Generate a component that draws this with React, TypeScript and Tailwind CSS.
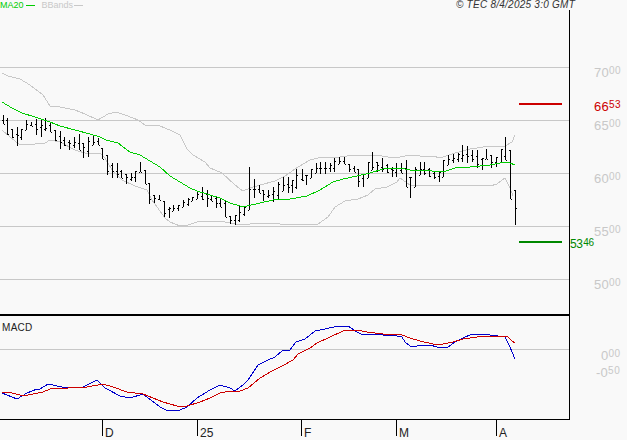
const sans = '[font-family:"Liberation_Sans",Arial,sans-serif]';

// page coordinates, read off the chart: [x, high, low]
const bars: [number, number, number][] = [
  [3,115,124],[7,118,135],[12,129,138],[17,127,146],[21,129,140],[26,120,130],[31,122,126],[36,119,135],[41,120,137],[45,118,131],
  [50,123,132],[55,130,141],[60,131,149],[64,137,146],[69,140,150],[74,137,148],[79,134,150],[83,143,158],[88,137,157],[93,136,145],
  [98,138,145],[102,148,159],[107,155,175],[112,163,178],[117,163,178],[121,170,178],[126,174,184],[131,173,181],[135,171,182],[140,162,172],
  [145,170,184],[149,183,204],[154,195,203],[159,195,200],[164,201,217],[169,207,218],[173,205,211],[178,205,211],[183,200,207],[188,198,206],
  [192,197,201],[197,192,199],[202,187,200],[207,190,207],[211,195,201],[216,197,208],[220,198,207],[225,200,217],[230,216,224],[235,215,225],
  [239,206,222],[244,207,216],[249,167,210],[254,179,198],[259,185,193],[263,190,201],[268,190,198],[273,187,202],[278,182,200],[283,177,191],
  [288,177,193],[292,180,193],[296,169,189],[302,169,181],[306,175,185],[311,169,178],[316,163,173],[320,162,174],[325,162,174],[330,163,172],
  [334,158,172],[339,157,164],[344,157,164],[349,164,172],[354,166,172],[358,169,187],[363,174,187],[368,162,178],[372,152,170],[377,162,172],
  [382,158,172],[387,164,173],[392,167,177],[396,163,177],[401,163,173],[406,160,187],[410,177,198],[415,167,187],[420,162,175],[424,162,175],
  [429,168,177],[434,172,179],[439,172,182],[443,160,177],[448,155,165],[453,154,163],[458,153,162],[462,145,162],[467,146,163],[472,150,162],
  [477,150,168],[482,158,170],[486,149,159],[491,155,168],[496,157,167],[501,149,162],[505,137,160],[510,150,199],[515,190,225],
];

const upper = "2,73 8,76 20,79 30,85 43,95 50,106 60,107 75,110 85,114 98,120 108,114 116,112 125,115 138,120 145,125 160,126 172,131 180,135 187,149 193,155 205,162 210,168 222,173 235,185 243,191 250,188 260,185 275,181 285,176 298,167 310,160 322,157 340,157 355,155 375,155 395,158 410,155 420,156 433,156 440,158 455,153 470,149 490,146 505,146 512,142 515,135";
const lower = "2,130 10,137 20,145 35,144 45,143 50,140 60,142 75,150 88,154 100,153 105,158 112,170 122,180 135,186 147,190 152,200 165,218 170,222 180,226 188,225 197,222 210,221 225,222 240,225 260,223 280,224 300,225 318,224 328,217 335,207 345,201 358,199 368,195 375,189 387,187 397,182 400,178 410,185 420,185 432,185 450,186 460,185 490,186 497,184 505,178 510,188 513,196";
const ma20 = "2,102 12,108 22,113 35,117 50,122 60,126 75,130 90,134 100,137 106,140 118,143 130,152 140,155 150,161 160,167 170,176 180,182 190,188 197,191 207,194 210,195 220,198 230,203 240,206 247,206 260,203 273,200 290,199 307,196 320,190 333,182 343,179 357,176 370,173 383,169 400,168 410,170 420,170 432,171 443,172 455,168 470,167 490,165 505,162 510,163 515,165";
const macd = "2,393 17,399 27,393 37,389 40,389 48,384 62,387 70,388 77,387 83,387 97,380 105,388 120,396 130,398 143,394 160,407 168,411 180,410 187,407 197,398 210,390 220,385 230,388 235,391 243,385 248,380 258,365 268,360 275,357 282,351 290,350 296,342 305,339 315,331 325,329 338,326 348,326 357,332 363,335 370,334 383,335 397,336 402,337 405,342 410,346 417,346 420,345 430,345 437,347 440,348 448,347 455,342 463,338 472,334 482,334 490,335 505,337 510,347 515,359";
const signal = "2,392 8,392 20,395 28,395 43,392 50,389 87,387 103,384 113,387 127,392 143,394 163,402 177,406 187,406 200,402 210,398 220,393 230,391 240,391 248,388 260,378 272,371 282,366 293,360 298,354 310,348 317,343 330,337 343,331 357,330 367,332 383,334 402,335 410,338 420,341 433,344 443,344 453,342 463,339 477,337 507,336 512,341 515,343";

const clamp = (v: number, lo: number, hi: number) => Math.min(hi, Math.max(lo, v));

function Line({ points, color }: { points: string; color: string }) {
  return <polyline points={points} fill="none" stroke={color} strokeWidth={1} shapeRendering="crispEdges" />;
}

function PriceChart() {
  return (
    <svg width={569} height={304} viewBox="0 10 569 304" className="block">
      {[67, 120, 173, 226, 279].map((y) => (
        <line key={y} x1={0} x2={569} y1={y + 0.5} y2={y + 0.5} stroke="#c8c8c8" shapeRendering="crispEdges" />
      ))}
      <Line points={upper} color="#c8c8c8" />
      <Line points={lower} color="#c8c8c8" />
      {bars.map(([x, h, l], i) => {
        const prev = bars[i - 1] ?? bars[i];
        const next = bars[i + 1] ?? bars[i];
        const open = Math.round(clamp((prev[1] + prev[2]) / 2, h, l));
        const close = Math.round(clamp((next[1] + next[2]) / 2, h, l));
        return (
          <g key={x} stroke="#000" shapeRendering="crispEdges">
            <line x1={x + 0.5} x2={x + 0.5} y1={h} y2={l} />
            <line x1={x - 1} x2={x} y1={open + 0.5} y2={open + 0.5} />
            <line x1={x + 1} x2={x + 2} y1={close + 0.5} y2={close + 0.5} />
          </g>
        );
      })}
      <Line points={ma20} color="#00cc00" />
      <rect x={519} y={103} width={43} height={2} fill="#cc0000" />
      <rect x={519} y={241} width={43} height={2} fill="#008800" />
    </svg>
  );
}

function MacdChart() {
  return (
    <svg width={569} height={103} viewBox="0 316 569 103" className="block">
      <line x1={0} x2={569} y1={349.5} y2={349.5} stroke="#c8c8c8" shapeRendering="crispEdges" />
      <Line points={macd} color="#0000cc" />
      <Line points={signal} color="#cc0000" />
    </svg>
  );
}

function AxisLabel({ big, small, className }: { big: string; small: string; className?: string }) {
  return (
    <div className={`flex items-start ${className ?? "text-[#c8c8c8]"}`}>
      <span className="text-[13px] leading-[11px] tracking-[0.2px]">{big}</span>
      <span className="text-[10px] leading-[8px] tracking-[0.6px]">{small}</span>
    </div>
  );
}

export default function App() {
  return (
    <div className={`relative w-[627px] h-[440px] overflow-hidden bg-[#f9f9f9] ${sans}`}>
      {/* legend and copyright */}
      <div className="flex items-center h-[10px] text-[9px] leading-[10px]">
        <span className="text-[#00cc00]">MA20</span>
        <span className="w-[9px] h-px bg-[#00cc00] ml-[2px]" />
        <span className="text-[#c8c8c8] ml-[7px]">BBands</span>
        <span className="w-[9px] h-px bg-[#c8c8c8] ml-px" />
        <span className="ml-auto mr-[52px] text-[10px] italic text-[#333] tracking-[0.25px]">© TEC 8/4/2025 3:0 GMT</span>
      </div>

      <div className="flex">
        <div className="w-[570px] border-r border-black">
          <PriceChart />
          <div className="h-[2px] bg-black" />
          <MacdChart />
          <div className="h-px bg-black" />
        </div>

        {/* value axis */}
        <div className="relative flex-1 pt-[57px]">
          {[
            ["70", "00"],
            ["65", "00"],
            ["60", "00"],
            ["55", "00"],
            ["50", "00"],
          ].map(([big, small], i) => (
            <div key={i} className="h-[53px] pl-[24px]">
              <AxisLabel big={big} small={small} />
            </div>
          ))}
          <div className="absolute left-[24px] top-[91px]">
            <AxisLabel big="66" small="53" className="text-[#cc0000]" />
          </div>
          <div className="absolute left-0 top-[229px] -tracking-[0.5px]">
            <div className="flex items-start text-[#008800]">
              <span className="text-[12px] leading-[11px]">53</span>
              <span className="text-[10px] leading-[8px] ml-px">46</span>
            </div>
          </div>
          <div className="absolute left-[31px] top-[340px]">
            <AxisLabel big="0" small="00" />
          </div>
          <div className="absolute left-[26px] top-[357px]">
            <AxisLabel big="-0" small="50" />
          </div>
        </div>
      </div>

      {/* month axis */}
      <div className="flex h-[16px] pl-[102px] text-[12px] leading-[13px] text-[#222]">
        {[
          ["D", "w-[95px]"],
          ["25", "w-[104px]"],
          ["F", "w-[95px]"],
          ["M", "w-[100px]"],
          ["A", "w-[20px]"],
        ].map(([label, width]) => (
          <div key={label} className={`${width} border-l border-black pl-[2px] pt-[7px]`}>
            {label}
          </div>
        ))}
      </div>

      <div className="absolute left-[2px] top-[322px] text-[10px] leading-[11px] tracking-[0.3px] text-[#222]">MACD</div>
    </div>
  );
}
